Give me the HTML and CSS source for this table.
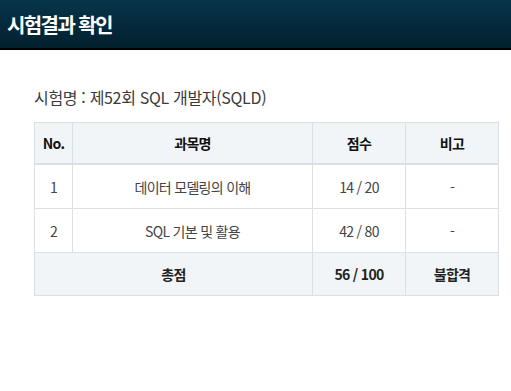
FILE: index.html
```html
<!DOCTYPE html>
<html lang="ko">
<head>
<meta charset="utf-8">
<link rel="stylesheet" href="styles.css">
</head>
<body>
<header class="topbar"><h1 class="title">시험결과 확인</h1></header>
<main class="content">
  <h2 class="exam-name">시험명 : 제52회 SQL 개발자(SQLD)</h2>
  <table class="result">
    <colgroup>
      <col class="c-no"><col class="c-subj"><col class="c-score"><col class="c-note">
    </colgroup>
    <thead>
      <tr><th>No.</th><th>과목명</th><th>점수</th><th>비고</th></tr>
    </thead>
    <tbody>
      <tr><td>1</td><td>데이터 모델링의 이해</td><td>14 / 20</td><td>-</td></tr>
      <tr><td>2</td><td>SQL 기본 및 활용</td><td>42 / 80</td><td>-</td></tr>
    </tbody>
    <tfoot>
      <tr><th colspan="2">총점</th><th>56 / 100</th><th>불합격</th></tr>
    </tfoot>
  </table>
</main>
</body>
</html>
```
FILE: styles.css
```css
html, body { margin: 0; padding: 0; background: #fff; }
body { font-family: "Noto Sans CJK KR", "Noto Sans", sans-serif; color: #333; }
.topbar {
  height: 48px;
  background: linear-gradient(#07344a, #03202d);
  border-bottom: 2px solid #000;
  display: flex;
  align-items: center;
  padding-left: 7px;
}
.title {
  margin: 0;
  color: #fff;
  font-size: 20px;
  font-weight: 700;
  letter-spacing: -0.08em;
}
.content { padding: 34px 12px 0 34px; }
.exam-name {
  margin: 0 0 12px 0;
  font-size: 16px;
  font-weight: 400;
  color: #3a3a3a;
  letter-spacing: -0.02em;
  line-height: 26px;
}
.result {
  border-collapse: collapse;
  width: 465px;
  font-size: 14px;
  letter-spacing: -0.05em;
}
.c-no { width: 38px; }
.c-subj { width: 240px; }
.c-score { width: 93px; }
.c-note { width: 93px; }
.result th, .result td {
  border: 1px solid #dcdfe3;
  text-align: center;
  padding: 0;
}
.result thead th {
  height: 40px;
  background: #f2f5f7;
  color: #111;
  font-weight: 700;
  border-bottom: 2px solid #dcdfe3;
}
.result td { height: 43px; color: #444; font-weight: 400; }
.result tfoot th { height: 42px; background: #f2f5f7; color: #222; font-weight: 700; }
```
